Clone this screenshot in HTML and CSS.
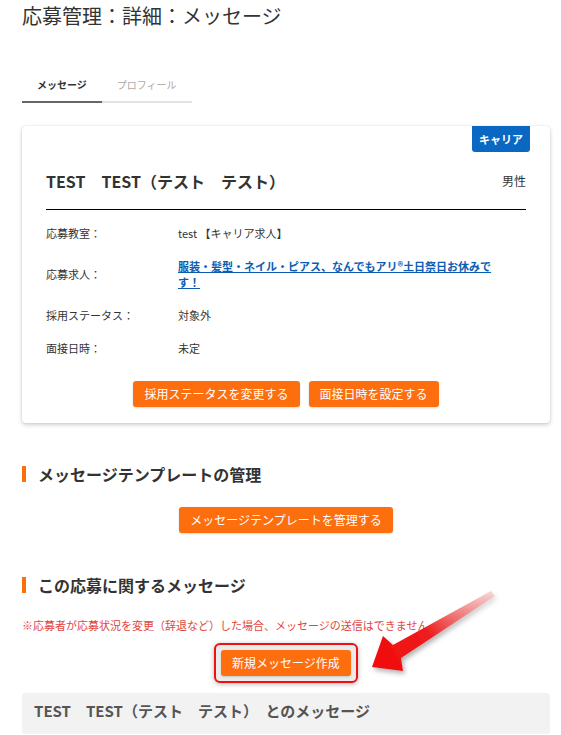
FILE: index.html
```html
<!DOCTYPE html>
<html lang="ja">
<head>
    <meta charset="UTF-8">
    <meta name="viewport" content="width=device-width, initial-scale=1.0">
    <title>応募管理：詳細：メッセージ</title>
    <link rel="stylesheet" href="styles.css">
</head>
<body>
    <div id="wrap">
        <h1 class="page-title">応募管理：詳細：メッセージ</h1>

        <ul class="tabs">
            <li class="on">メッセージ</li>
            <li>プロフィール</li>
        </ul>

        <section class="card">
            <div class="card-top">
                <span class="badge">キャリア</span>
            </div>
            <div class="name-row">
                <p class="name">TEST　TEST（テスト　テスト）</p>
                <p class="sex">男性</p>
            </div>
            <dl class="info">
                <div class="info-row">
                    <dt>応募教室：</dt>
                    <dd>test 【キャリア求人】</dd>
                </div>
                <div class="info-row">
                    <dt>応募求人：</dt>
                    <dd><a href="#">服装・髪型・ネイル・ピアス、なんでもアリ®土日祭日お休みです！</a></dd>
                </div>
                <div class="info-row">
                    <dt>採用ステータス：</dt>
                    <dd>対象外</dd>
                </div>
                <div class="info-row">
                    <dt>面接日時：</dt>
                    <dd>未定</dd>
                </div>
            </dl>
            <div class="btns">
                <a class="btn" href="#">採用ステータスを変更する</a>
                <a class="btn" href="#">面接日時を設定する</a>
            </div>
        </section>

        <h2 class="sub-title">メッセージテンプレートの管理</h2>
        <div class="btns">
            <a class="btn" href="#">メッセージテンプレートを管理する</a>
        </div>

        <h2 class="sub-title second">この応募に関するメッセージ</h2>
        <p class="note">※応募者が応募状況を変更（辞退など）した場合、メッセージの送信はできません</p>
        <div class="btns">
            <span class="mark"><a class="btn" href="#">新規メッセージ作成</a></span>
        </div>

        <div class="msg-head">TEST　TEST（テスト　テスト）　とのメッセージ</div>
    </div>

    <!-- 注釈の矢印 -->
    <svg class="arrow" width="561" height="735" viewBox="0 0 561 735">
        <defs>
            <linearGradient id="arrowGrad" x1="372" y1="667" x2="496" y2="592" gradientUnits="userSpaceOnUse">
                <stop offset="0" stop-color="#f00a0a"/>
                <stop offset="0.45" stop-color="#ee1c1c"/>
                <stop offset="1" stop-color="#f4a0a0" stop-opacity="0.4"/>
            </linearGradient>
            <filter id="arrowShadow" x="-20%" y="-20%" width="140%" height="140%">
                <feDropShadow dx="2" dy="3" stdDeviation="2.5" flood-color="#000" flood-opacity="0.3"/>
            </filter>
        </defs>
        <polygon points="372,667 383,636 393,645 491,591 495,596 401,658 403,671" fill="url(#arrowGrad)" filter="url(#arrowShadow)"/>
    </svg>
</body>
</html>
```

FILE: styles.css
```css
*{margin:0; padding:0; box-sizing:border-box;}
li{list-style:none;}
a{color:inherit;}
body{
    font-family:"Noto Sans CJK JP", "Noto Sans", sans-serif;
    color:#333;
    background:#fff;
}
#wrap{width:528px; margin-left:22px;}

.page-title{
    font-size:20px;
    font-weight:normal;
    line-height:30px;
    padding-top:1px;
}

.tabs{display:flex; margin-top:40px;}
.tabs li{
    font-size:10px;
    line-height:16px;
    padding:6px 15px 8px;
    color:#aaa;
    border-bottom:2px solid #e2e2e2;
}
.tabs li.on{color:#333; font-weight:bold; border-bottom-color:#666;}

.card{
    margin-top:23px;
    padding:0 24px 16px;
    background:#fff;
    border-radius:4px;
    box-shadow:0 0 2px rgba(0,0,0,.12), 0 2px 4px rgba(0,0,0,.18);
}
.card-top{display:flex; justify-content:flex-end; margin-right:-4px;}
.badge{
    display:block;
    background:#0b68c2;
    color:#fff;
    font-size:11px;
    font-weight:bold;
    line-height:26px;
    padding:0 7px;
    border-radius:0 0 3px 3px;
}
.name-row{
    display:flex;
    justify-content:space-between;
    align-items:center;
    margin-top:17px;
    padding-bottom:16px;
    border-bottom:1px solid #000;
}
.name{font-size:16px; font-weight:bold; line-height:24px;}
.sex{font-size:12px; line-height:24px;}

.info{margin-top:7px; font-size:11px; line-height:16px;}
.info-row{display:flex; align-items:center; padding:8px 0; margin-bottom:1px;}
.info dt{width:132px;}
.info dd{width:316px;}
.info dd a{color:#0b5db3; font-weight:bold;}

.btns{display:flex; justify-content:center; gap:9px;}
.card .btns{margin-top:17px;}
.btn{
    display:block;
    background:#fd6e0f;
    color:#fff;
    text-decoration:none;
    font-size:12px;
    line-height:26px;
    padding:0 11px;
    border-radius:3px;
    box-shadow:0 1px 2px rgba(0,0,0,.15);
}

.sub-title{
    margin-top:39px;
    font-size:16px;
    line-height:24px;
    display:flex;
    align-items:center;
}
.sub-title::before{
    content:"";
    width:4px;
    height:16px;
    background:#fd6e0f;
    margin-right:12px;
}
.sub-title + .btns{margin-top:21px;}
.sub-title.second{margin-top:40px;}

.note{margin-top:20px; font-size:11px; line-height:16px; color:#e0463f;}
.note + .btns{margin-top:10px;}
.mark{
    display:block;
    padding:5px;
    border:2px solid #ee1111;
    border-radius:6px;
    background:#ebebeb;
    box-shadow:0 1px 5px rgba(0,0,0,.3);
}

.msg-head{
    margin-top:10px;
    background:#f2f2f2;
    border-radius:3px;
    padding:7px 12px 12px;
    font-size:15px;
    font-weight:bold;
    line-height:22px;
    color:#555;
}

.arrow{position:absolute; top:0; left:0; pointer-events:none;}
```
